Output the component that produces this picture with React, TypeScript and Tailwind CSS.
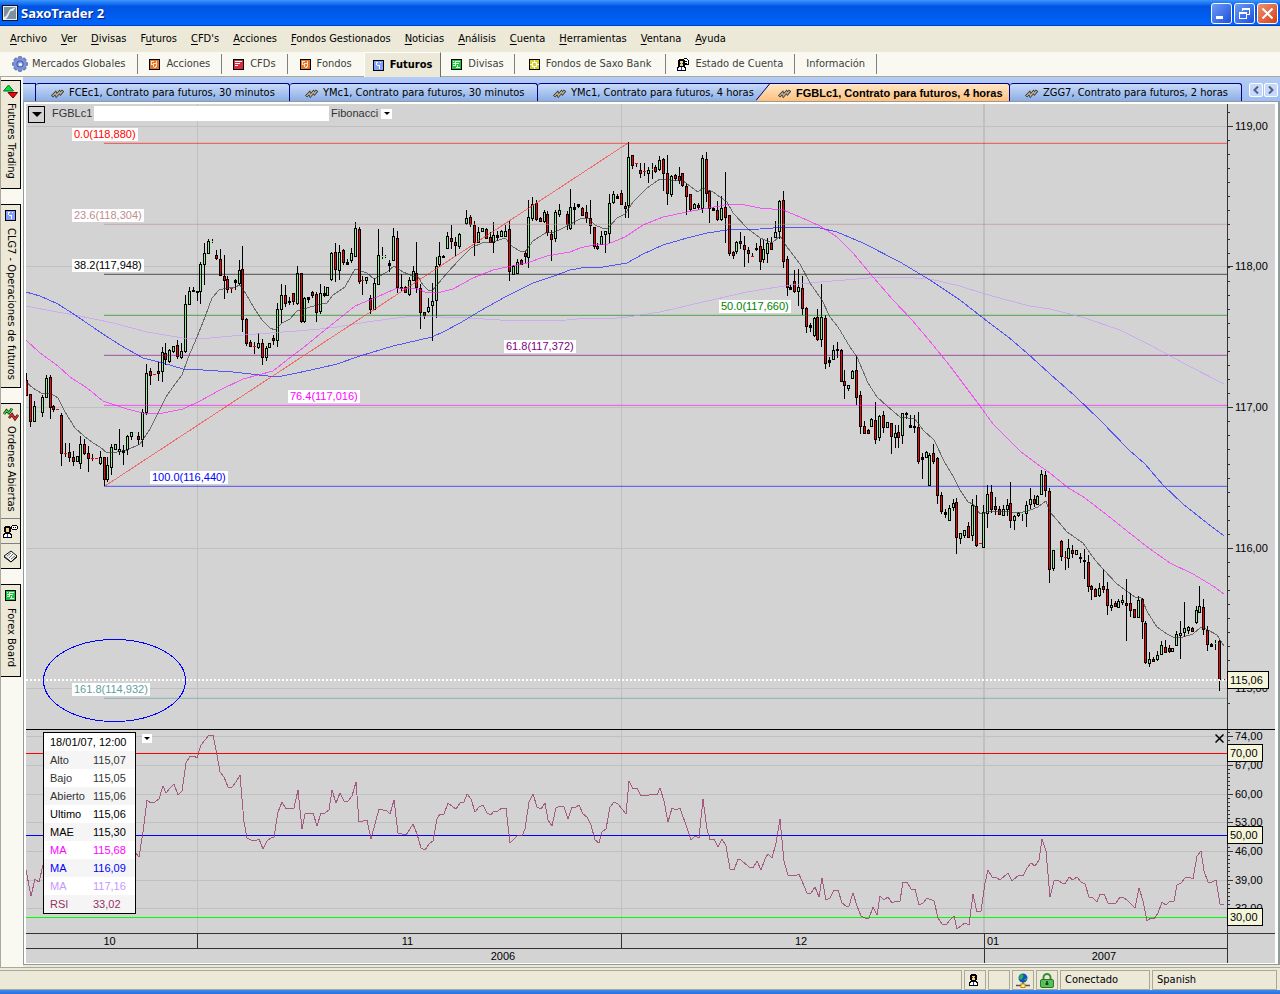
import React from "react";

// x, high, body top, body bottom, low, kind (r = down, g = up, k = flat)
const CANDLES = `
26 373 380 395 395 r|30 394 394 421 427 r|34 401 406 421 421 g|38 411 411 411 411 g|42 395 397 412 417 g|46 375 378 397 397 g|50 375 377 407 419 r|53 405 406 409 412 r|
57 409 409 409 409 r|61 413 415 453 466 r|65 443 453 453 457 r|69 443 452 457 462 r|73 451 457 461 466 r|77 456 456 461 461 g|80 436 444 463 469 g|84 439 444 453 455 r|
88 446 453 458 472 r|92 454 458 458 461 r|96 458 458 458 458 r|100 451 457 463 465 g|104 457 457 479 486 r|107 457 465 479 482 g|111 444 447 467 475 g|115 444 444 449 449 g|
119 429 449 451 455 g|123 445 450 452 465 k|127 435 436 449 455 g|131 432 432 436 440 g|135 432 432 432 432 g|138 432 436 439 445 r|142 409 412 439 447 g|146 364 373 412 415 g|
150 368 371 375 385 r|154 374 374 374 374 r|158 362 371 373 381 r|162 347 352 371 382 g|165 343 353 359 365 r|169 349 350 361 363 g|173 346 346 351 353 g|177 340 345 356 359 r|
181 343 351 357 359 g|185 295 304 351 353 g|189 287 291 304 304 g|193 287 290 291 292 k|197 291 291 292 301 k|200 262 264 291 304 g|204 243 253 264 285 g|208 239 241 253 253 g|
212 239 241 241 243 g|216 250 255 258 260 r|220 249 259 275 275 r|224 255 276 280 299 r|227 276 279 289 293 r|231 288 288 288 293 r|235 279 280 282 290 k|239 260 270 283 285 g|
242 246 269 319 332 r|246 318 319 343 346 r|250 340 342 346 346 r|254 342 346 346 354 r|258 333 343 347 349 g|262 339 343 357 365 r|266 346 348 357 361 g|269 343 343 347 347 g|
273 335 338 340 345 r|277 303 309 340 347 g|281 284 295 309 323 g|285 285 295 303 307 r|289 297 301 302 305 k|293 293 293 301 305 r|297 266 273 303 305 g|301 273 273 321 323 r|
304 297 298 321 323 g|308 297 297 299 303 k|312 291 292 295 298 r|316 292 294 312 322 r|320 284 293 311 314 g|324 286 293 295 297 k|327 287 287 295 295 g|331 252 253 279 281 g|
335 243 252 269 282 r|339 245 252 270 280 g|343 249 250 262 265 r|347 259 262 264 264 k|351 248 253 260 263 g|355 222 228 256 257 g|359 227 229 281 284 r|362 276 280 280 295 r|
366 277 277 280 284 g|370 295 298 309 314 r|374 278 283 309 310 g|378 229 255 284 284 g|382 247 256 256 259 g|385 255 256 256 258 g|389 260 263 265 272 k|393 228 236 260 261 g|
397 231 238 287 293 r|401 274 287 288 291 k|405 286 287 292 292 r|409 277 280 294 296 g|413 266 271 280 281 g|416 242 273 287 293 r|420 284 288 312 329 r|424 312 312 315 319 r|
428 298 307 311 313 g|432 283 301 305 341 g|436 257 266 300 318 g|439 242 256 264 267 g|443 255 256 257 258 k|447 232 236 248 249 g|451 225 238 241 249 r|455 237 242 245 256 r|
459 233 234 246 249 g|463 232 232 232 232 g|466 210 218 223 225 g|470 215 217 224 227 r|474 221 225 242 256 r|478 227 232 242 243 g|482 228 228 231 231 g|486 228 229 238 239 r|
490 232 237 242 243 r|493 222 235 242 253 g|497 231 235 237 241 k|501 230 231 236 237 g|505 225 231 236 237 g|509 221 229 271 281 r|513 265 266 274 275 g|517 259 262 273 274 g|
521 259 260 264 265 r|525 251 253 256 263 r|528 200 217 257 268 g|532 197 204 218 221 g|536 200 203 219 221 r|540 217 218 221 222 r|544 210 212 221 223 g|547 211 214 232 236 r|
551 230 234 239 261 r|555 210 212 238 242 g|559 204 210 214 217 g|563 211 211 211 211 g|567 211 214 224 230 r|570 189 207 228 230 g|574 203 207 209 225 k|578 204 204 206 208 k|
582 207 208 215 215 r|586 205 212 217 223 r|590 200 218 225 234 r|594 227 227 246 249 r|597 243 246 248 250 r|601 231 236 244 245 g|605 231 231 234 253 g|609 194 203 233 243 g|
613 191 194 202 204 g|617 194 196 198 199 k|621 190 193 204 205 r|625 202 206 208 218 r|628 142 157 205 218 g|632 155 155 165 169 r|636 163 163 163 167 r|640 163 170 173 178 r|
644 163 171 171 176 r|648 167 170 173 183 g|652 163 169 169 179 g|655 165 167 171 173 r|659 156 160 169 171 g|663 158 159 173 191 r|667 155 173 193 205 r|671 175 176 194 197 g|
675 174 175 178 181 r|679 167 176 180 184 r|682 173 173 185 187 r|686 183 186 196 215 r|690 194 194 209 211 r|694 203 204 208 209 g|698 203 205 207 210 r|702 155 158 208 213 g|
706 152 159 193 202 r|709 190 191 208 223 r|713 207 208 210 211 k|717 201 210 219 221 r|721 196 208 219 221 g|725 172 207 217 243 r|729 215 215 253 256 r|733 251 252 255 259 r|
736 241 242 251 254 g|740 232 241 243 249 r|744 236 245 249 267 r|748 247 250 253 263 r|752 253 256 256 257 r|756 243 248 249 251 k|760 239 246 261 270 r|763 240 249 259 263 g|
767 238 243 253 263 g|771 237 243 249 250 r|775 221 232 237 237 g|779 200 201 231 239 g|783 191 200 261 268 r|787 256 259 287 296 r|790 285 287 289 289 k|794 270 281 291 293 r|
798 269 287 291 306 g|802 276 288 308 315 r|806 307 308 326 333 r|810 323 325 327 332 k|814 317 318 335 337 g|817 309 317 339 341 r|821 284 317 339 347 g|825 315 318 363 369 r|
829 357 360 362 367 k|833 345 350 359 360 g|837 342 349 350 358 k|841 349 350 381 382 r|844 370 381 385 399 r|848 385 385 388 391 g|852 370 371 378 379 g|856 356 370 397 405 r|
860 391 395 426 434 r|864 421 426 433 433 r|868 429 430 433 434 r|871 418 419 426 427 g|875 402 420 439 444 r|879 415 416 437 441 g|883 411 415 427 433 r|887 422 422 427 427 g|
891 423 423 436 454 r|895 425 433 437 448 g|898 425 432 437 448 r|902 413 413 435 444 g|906 412 413 414 419 k|910 415 425 427 428 k|914 415 426 427 433 k|918 412 427 461 464 r|
922 453 457 459 479 k|926 451 452 457 458 g|929 453 455 485 485 g|933 444 453 461 464 r|937 457 458 495 504 r|941 492 495 511 514 r|945 509 512 514 518 k|949 505 508 520 521 g|
953 499 503 507 511 g|956 498 502 537 554 r|960 533 533 538 544 g|964 530 530 535 538 g|968 522 526 537 538 r|972 499 505 535 541 g|976 495 506 545 547 r|980 543 543 543 543 r|
983 505 512 547 547 g|987 485 494 513 528 g|991 485 492 509 513 r|995 497 506 509 515 r|999 506 509 514 514 r|1003 505 509 515 516 g|1007 499 505 509 516 g|1010 482 503 520 528 r|
1014 515 516 520 530 g|1018 512 513 515 517 g|1022 513 513 513 521 g|1026 501 505 513 527 g|1030 488 499 504 509 g|1034 495 499 503 507 r|1037 495 496 504 504 g|1041 470 474 494 495 g|
1045 471 475 490 497 r|1049 488 491 569 583 r|1053 550 550 568 571 g|1057 549 549 549 550 g|1061 540 541 556 561 r|1065 551 557 557 570 r|1068 539 548 558 568 g|1072 545 550 553 558 r|
1076 550 550 554 555 g|1080 553 557 558 563 k|1084 549 560 561 579 k|1088 555 562 586 592 r|1091 585 586 589 600 r|1095 588 589 596 597 r|1099 583 588 595 597 g|1103 569 586 589 593 r|
1107 582 589 605 615 r|1111 599 605 607 611 g|1115 601 603 606 607 r|1118 599 601 607 607 g|1122 595 600 602 605 g|1126 579 603 605 641 r|1130 593 603 610 617 r|1134 609 609 617 618 r|
1138 596 600 617 617 g|1142 598 599 621 639 r|1145 621 623 662 664 r|1149 652 659 663 667 g|1153 657 659 661 662 r|1157 651 655 659 661 g|1161 641 645 654 655 g|1165 640 647 652 652 r|
1169 645 648 651 653 r|1172 648 648 651 651 g|1176 631 634 645 646 g|1180 621 633 635 659 g|1184 602 628 632 637 g|1188 626 627 630 634 g|1192 627 628 631 631 r|1196 606 610 622 624 g|
1199 586 606 612 613 g|1203 599 607 629 635 r|1207 626 630 644 651 r|1211 643 644 646 647 k|1215 640 643 643 650 g|1219 640 641 679 691 r|1223 679 679 679 679 r`
  .split("|")
  .map((row) => {
    const [x, high, top, bottom, low, kind] = row.trim().split(" ");
    return { x: +x, high: +high, top: +top, bottom: +bottom, low: +low, kind };
  });

const AVERAGES = [
  {
    name: "MA200",
    color: "#c896ff",
    points:
      "26,306 57,312 75,315 113,323 147,332 183,338 210,338 243,335 270,333 297,331 320,329 337,327 367,322 397,318 415,316 467,318 500,320 530,321 567,320 587,318 607,319 627,317 660,312 703,302 747,292 790,285 820,282 857,279 880,277 900,277 930,279 960,286 985,294 1007,300 1030,306 1050,309 1085,318 1120,330 1150,345 1185,364 1224,384",
  },
  {
    name: "MA100",
    color: "#1414ff",
    points:
      "26,292 40,296 58,304 75,315 103,334 120,345 143,358 163,363 183,369 203,370 233,372 277,377 297,373 320,368 337,364 360,356 393,346 432,337 443,332 460,323 480,311 507,296 533,283 557,275 570,270 587,267 603,267 627,263 643,254 663,245 687,238 707,233 727,230 760,229 787,227 807,227 820,228 837,232 863,243 900,262 930,280 960,300 983,318 1007,336 1027,353 1050,374 1075,396 1100,420 1129,450 1145,464 1163,485 1183,504 1207,523 1224,536",
  },
  {
    name: "MA55",
    color: "#ff14ff",
    points:
      "26,340 40,353 58,366 70,377 87,388 103,401 127,409 143,413 163,413 183,409 200,401 220,390 243,379 258,375 273,371 287,360 303,348 320,334 355,306 377,297 395,289 415,288 425,292 437,293 453,289 473,278 493,270 507,267 527,263 547,256 570,252 580,248 593,245 608,244 625,237 643,225 663,217 687,212 720,206 728,204 740,204 760,208 783,210 800,217 820,226 837,237 853,253 873,277 893,300 912,320 933,345 950,366 980,406 993,424 1007,438 1020,451 1037,464 1050,473 1067,487 1085,498 1107,515 1127,531 1150,549 1170,563 1193,574 1213,586 1224,594",
  },
  {
    name: "MAE",
    color: "#333333",
    points:
      "26,382 33,388 41,393 50,393 58,398 65,412 75,428 84,436 93,443 100,447 107,453 117,452 127,450 140,444 150,429 158,413 166,397 175,384 182,375 188,358 197,337 205,317 212,298 219,290 227,288 235,287 240,285 246,294 254,308 262,320 270,328 275,330 282,323 290,319 297,311 307,308 317,305 327,303 333,295 345,287 355,269 367,273 374,279 387,272 394,266 403,272 413,276 418,277 423,285 428,290 432,291 437,285 447,273 460,259 471,248 482,243 493,242 505,238 513,247 520,251 525,252 533,241 547,232 553,233 567,226 580,219 588,218 595,225 602,228 608,228 617,218 625,214 633,202 647,188 660,179 670,180 683,181 698,192 703,188 713,192 727,202 733,213 747,228 760,238 772,243 780,236 787,247 800,264 810,283 822,300 830,317 838,327 850,347 857,357 868,383 877,397 887,406 900,417 915,419 923,430 934,440 945,463 953,476 960,490 968,502 973,504 980,514 987,512 1000,511 1020,513 1030,510 1038,507 1046,501 1050,512 1057,520 1067,532 1083,543 1095,560 1103,569 1117,584 1135,597 1141,598 1148,613 1157,627 1167,634 1173,637 1183,637 1193,634 1201,627 1208,630 1217,635 1224,646",
  },
];

const RSI =
  "26,870 31,896 35,879 39,882 43,865 60,850 90,862 120,845 136,853 139,857 143,832 147,800 151,803 155,802 159,799 163,786 166,793 170,788 174,784 178,795 182,791 186,763 190,756 194,756 197,758 201,745 205,740 209,735 213,735 217,755 220,772 224,777 228,787 232,787 236,782 240,775 244,822 247,838 251,840 255,841 259,839 263,849 267,841 271,838 274,837 278,812 282,802 286,809 290,808 294,808 298,790 302,829 305,814 313,813 317,826 321,813 325,813 329,810 332,790 336,803 340,793 344,801 348,801 352,796 356,782 359,822 367,820 371,839 379,809 387,811 390,814 394,800 398,833 406,835 410,829 413,824 417,834 421,848 425,850 429,844 433,841 437,819 440,814 444,814 448,803 456,809 460,803 464,802 467,794 471,799 475,812 479,807 483,805 487,813 491,815 494,811 498,811 502,808 506,808 510,843 518,835 522,836 525,829 529,802 533,794 537,807 541,809 545,803 548,820 552,826 556,808 560,806 564,807 568,819 572,807 576,807 579,805 583,814 587,817 591,825 595,840 599,843 602,832 606,829 610,807 614,802 618,804 626,814 629,781 633,789 637,788 641,796 649,795 653,794 657,795 660,788 664,801 668,822 672,808 676,810 680,808 687,828 691,840 695,836 699,838 703,799 707,829 710,840 714,839 718,847 722,839 726,846 730,869 734,870 738,859 741,860 749,867 753,868 757,861 761,870 765,859 768,854 772,858 776,843 780,819 784,861 788,875 795,876 799,874 807,893 811,893 815,887 819,897 822,878 826,900 830,898 834,890 838,890 842,903 846,906 849,906 853,893 857,906 861,916 865,918 869,918 873,907 877,915 880,896 884,900 888,897 892,903 896,901 900,901 903,882 907,882 911,889 915,889 919,905 923,903 927,898 934,901 938,918 942,924 946,925 950,920 954,916 957,929 965,923 969,925 973,894 977,912 981,911 985,883 988,870 992,877 996,877 1000,880 1008,873 1012,881 1019,875 1023,876 1027,868 1031,863 1035,866 1039,860 1042,839 1046,851 1050,897 1054,881 1058,880 1062,883 1065,884 1069,877 1073,880 1077,877 1081,882 1085,884 1089,897 1093,898 1097,902 1100,894 1104,894 1108,903 1116,903 1120,897 1123,897 1127,900 1135,908 1139,888 1143,901 1147,921 1151,918 1154,919 1158,913 1162,902 1166,905 1170,901 1174,901 1177,885 1181,883 1185,878 1189,877 1193,879 1197,856 1201,851 1204,871 1208,882 1212,882 1216,880 1220,904 1224,905";

const FIBS = [
  { label: "0.0(118,880)", x: 72, y: 128, line: 143, color: "#ff0000" },
  { label: "23.6(118,304)", x: 72, y: 209, line: 224, color: "#bc8f8f" },
  { label: "38.2(117,948)", x: 72, y: 259, line: 274, color: "#000000" },
  { label: "50.0(117,660)", x: 719, y: 300, line: 315, color: "#008000" },
  { label: "61.8(117,372)", x: 504, y: 340, line: 355, color: "#800080" },
  { label: "76.4(117,016)", x: 288, y: 390, line: 405, color: "#ff00ff" },
  { label: "100.0(116,440)", x: 150, y: 471, line: 486, color: "#0000ff" },
  { label: "161.8(114,932)", x: 72, y: 683, line: 698, color: "#5f9ea0" },
];

const PRICE_TICKS = [
  { y: 126, label: "119,00" },
  { y: 266, label: "118,00" },
  { y: 407, label: "117,00" },
  { y: 548, label: "116,00" },
  { y: 688, label: "115,00" },
];

const RSI_TICKS = [
  { y: 736, label: "74,00" },
  { y: 765, label: "67,00" },
  { y: 794, label: "60,00" },
  { y: 822, label: "53,00" },
  { y: 851, label: "46,00" },
  { y: 880, label: "39,00" },
  { y: 908, label: "32,00" },
];

const RSI_LEVELS = [
  { y: 753, label: "70,00", color: "#ff0000" },
  { y: 835, label: "50,00", color: "#0000ff" },
  { y: 917, label: "30,00", color: "#00ff00" },
];

const READOUT = [
  { name: "Alto", value: "115,07", tone: "text-[#333]" },
  { name: "Bajo", value: "115,05", tone: "text-[#333]" },
  { name: "Abierto", value: "115,06", tone: "text-[#333]" },
  { name: "Ultimo", value: "115,06", tone: "text-black" },
  { name: "MAE", value: "115,30", tone: "text-black" },
  { name: "MA", value: "115,68", tone: "text-[#f0f]" },
  { name: "MA", value: "116,09", tone: "text-[#00f]" },
  { name: "MA", value: "117,16", tone: "text-[#c896ff]" },
  { name: "RSI", value: "33,02", tone: "text-[#963264]" },
];

const MENU = [
  ["", "A", "rchivo"],
  ["", "V", "er"],
  ["", "D", "ivisas"],
  ["F", "u", "turos"],
  ["", "C", "FD's"],
  ["", "A", "cciones"],
  ["", "F", "ondos Gestionados"],
  ["", "N", "oticias"],
  ["", "A", "nálisis"],
  ["", "C", "uenta"],
  ["", "H", "erramientas"],
  ["", "V", "entana"],
  ["", "A", "yuda"],
];

const top = (y: number, from: number, height: number) => `${((y - from) / height) * 100}%`;

function GearIcon() {
  return (
    <svg width="16" height="16" viewBox="0 0 16 16">
      <g fill="#7187d2" stroke="#4656a0" strokeWidth="0.6">
        {[0, 45, 90, 135].map((a) => (
          <rect key={a} x="6.2" y="0.5" width="3.6" height="15" rx="1" transform={`rotate(${a} 8 8)`} />
        ))}
      </g>
      <circle cx="8" cy="8" r="5.6" fill="#7f95dc" />
      <circle cx="8" cy="8" r="3.6" fill="#4458aa" />
      <circle cx="8" cy="8" r="2.6" fill="#8fa4e6" />
      <circle cx="8.5" cy="8.5" r="1.6" fill="#f9f9f2" />
    </svg>
  );
}

function StocksIcon() {
  return (
    <svg width="11" height="11" viewBox="0 0 11 11" shapeRendering="crispEdges">
      <rect x="0.5" y="0.5" width="10" height="10" fill="#e8742a" stroke="#000" />
      <path d="M2 2.5h3M2.5 2v3M2 5.5h2M4.500 4v4M4 4.500h4M7.500 2v5M6 7.500h2M5 8.500h2" fill="none" stroke="#fbe3d0" />
    </svg>
  );
}

function CfdIcon() {
  return (
    <svg width="11" height="11" viewBox="0 0 11 11" shapeRendering="crispEdges">
      <rect x="0.5" y="0.5" width="10" height="10" fill="#d72d3c" stroke="#000" />
      <path d="M2 2.5h7M2 4.5h5M2 6.5h3" fill="none" stroke="#fff" />
    </svg>
  );
}

function FuturesIcon() {
  return (
    <svg width="11" height="11" viewBox="0 0 11 11" shapeRendering="crispEdges">
      <rect x="0.5" y="0.5" width="10" height="10" fill="#82a0ff" stroke="#000" />
      <path d="M3.500 2v3M4 5.500h2M6.500 5v4M7.500 2v1M4 2.500h1" fill="none" stroke="#fff" />
    </svg>
  );
}

function ForexIcon() {
  return (
    <svg width="11" height="11" viewBox="0 0 11 11" shapeRendering="crispEdges">
      <rect x="0.5" y="0.5" width="10" height="10" fill="#1ec83c" stroke="#000" />
      <path d="M2 2.500h1M4 2.500h5M2 4.500h6M4.500 2v5M2 6.500h3M5 8.500h4M6.500 6v3" fill="none" stroke="#e6ffe6" />
    </svg>
  );
}

function FundIcon() {
  return (
    <svg width="11" height="11" viewBox="0 0 11 11" shapeRendering="crispEdges">
      <rect x="0.5" y="0.5" width="10" height="10" fill="#d7d223" stroke="#000" />
      <path d="M3.5 3.5h4v4h-4zM5.5 1v2M5.5 8v2M1 5.5h2M8 5.5h2" fill="none" stroke="#fff" />
    </svg>
  );
}

function AdvisorIcon() {
  return (
    <svg width="12" height="13" viewBox="0 0 12 13" shapeRendering="crispEdges">
      <path d="M6.500 0.500h3l2 2v4h-4" fill="#fff" stroke="#000" />
      <path d="M8 3.500h2M8 5.500h2" stroke="#000" />
      <path d="M2 1h5v1h1v6H7v1H2V8H1V2h1z" fill="#000" />
      <path d="M3 3h3v5H3z" fill="#f5d28c" />
      <path d="M3 5h1v1H3zM5 5h1v1H5z" fill="#6e4614" />
      <path d="M0.500 12.500v-3l2-1h4l2 1v3z" fill="#fff" stroke="#000" />
      <path d="M4 9h1v3H4z" fill="#1e32dc" />
    </svg>
  );
}

function PersonIcon() {
  return (
    <svg width="9" height="12" viewBox="0 0 9 12" shapeRendering="crispEdges">
      <path d="M2 0h5v1h1v5H7v1H2V6H1V1h1z" fill="#000" />
      <path d="M3 2h3v4H3z" fill="#f5d28c" />
      <path d="M3 3h1v1H3zM5 3h1v1H5z" fill="#6e4614" />
      <path d="M0.500 11.500v-3l2-1h4l2 1v3z" fill="#fff" stroke="#000" />
      <path d="M4 8h1v3H4z" fill="#1e32dc" />
    </svg>
  );
}

function ZigIcon() {
  return (
    <svg width="13" height="9" viewBox="0 0 13 9">
      <path d="M1 7.500L4.500 4l1 2.500L8.500 3l1 1.500L12 1.500" fill="none" stroke="#333" strokeWidth="3" />
      <path d="M1.500 7L4.500 4l1 2.500L8.500 3l1 1.500 2-2.500" fill="none" stroke="#b9ad8c" strokeWidth="1.500" />
    </svg>
  );
}

function TitleBar() {
  return (
    <header className="flex h-[26px] shrink-0 items-center justify-between bg-linear-to-b from-[#3c96ff] via-[#0054e3] via-25% to-[#0066fc] px-0.5 shadow-[inset_0_-1px_0_#003cc8]">
      <div className="flex items-center gap-[3px]">
        <svg width="16" height="16" viewBox="0 0 16 16">
          <rect x="0.5" y="0.5" width="15" height="15" fill="#7d91a0" stroke="#111" />
          <rect x="1.5" y="1.5" width="13" height="13" fill="none" stroke="#e8eef2" />
          <path d="M2 12c4-1 4-7 7-8l5-2-3 4-2 0c-2 1-2 6-5 8H2z" fill="#e4ecf0" />
        </svg>
        <h1 className="pt-px font-['Noto_Sans',sans-serif] text-[13px] font-bold text-white [text-shadow:1px_1px_#0a1e82]">SaxoTrader 2</h1>
      </div>
      <div className="flex gap-0.5">
        <button aria-label="Minimizar" className="flex size-[21px] items-end rounded-[3px] border border-white bg-linear-to-br from-[#6e9bf0] to-[#1e4be0] pb-1 pl-1">
          <span className="h-[3px] w-[7px] bg-white" />
        </button>
        <button aria-label="Restaurar" className="flex size-[21px] items-center justify-center rounded-[3px] border border-white bg-linear-to-br from-[#6e9bf0] to-[#1e4be0]">
          <svg width="11" height="11" viewBox="0 0 11 11" fill="none" stroke="#fff" shapeRendering="crispEdges">
            <path d="M3.5 3V0.5h7v6H8M3 1.5h8M0.5 4.5h7v6h-7zM0 5.5h8" />
          </svg>
        </button>
        <button aria-label="Cerrar" className="flex size-[21px] items-center justify-center rounded-[3px] border border-white bg-linear-to-br from-[#f0906e] to-[#d23c14]">
          <svg width="11" height="11" viewBox="0 0 11 11" stroke="#fff" strokeWidth="2">
            <path d="M0.5 0.5l10 10M10.5 0.5l-10 10" />
          </svg>
        </button>
      </div>
    </header>
  );
}

function ToolButton({ icon, pad = "px-[11px]", children }: { icon?: React.ReactNode; pad?: string; children: React.ReactNode }) {
  return (
    <button className={`my-0.5 flex items-center gap-1.5 border-r border-[#808080] text-[#404040] ${pad}`}>
      {icon}
      {children}
    </button>
  );
}

function Toolbar() {
  return (
    <nav className="flex h-[25px] shrink-0 items-stretch border-b border-[#aca899] bg-[#f9f9f2] whitespace-nowrap">
      <button className="my-0.5 flex items-center gap-1 border-r border-[#808080] px-3 text-[#404040]">
        <GearIcon />
        Mercados Globales
      </button>
      <ToolButton icon={<StocksIcon />}>Acciones</ToolButton>
      <ToolButton icon={<CfdIcon />}>CFDs</ToolButton>
      <button className="flex items-center gap-1.5 px-3 text-[#404040]">
        <StocksIcon />
        Fondos
      </button>
      <button className="-mb-px flex items-center gap-1.5 border-t border-r border-l border-t-white border-r-[#716f64] border-l-white bg-[#ece9d8] px-2 font-bold text-black">
        <FuturesIcon />
        Futuros
      </button>
      <ToolButton icon={<ForexIcon />} pad="px-2.5">
        Divisas
      </ToolButton>
      <ToolButton icon={<FundIcon />} pad="px-3.5">
        Fondos de Saxo Bank
      </ToolButton>
      <ToolButton icon={<AdvisorIcon />}>Estado de Cuenta</ToolButton>
      <ToolButton>Información</ToolButton>
    </nav>
  );
}

const sideTab = "flex items-center border border-l-0 border-black bg-[#ece9d8] [writing-mode:vertical-rl]";

function Sidebar() {
  return (
    <aside className="flex w-[23px] shrink-0 flex-col items-start gap-[15px] border-l border-[#aca899] bg-[#f9f9f2] pt-[3px] whitespace-nowrap text-black">
      <button className={`${sideTab} h-[109px] w-5 gap-1 pt-0.5`}>
        <svg width="16" height="16" viewBox="0 0 16 16">
          <path d="M0.5 8L5.5 2l5 6z" fill="#00e628" stroke="#064" />
          <path d="M5 9.500h9.500L10 15z" fill="#ff0000" stroke="#600" />
        </svg>
        Futures Trading
      </button>
      <button className={`${sideTab} h-[184px] w-5 gap-[7px] pt-[5px]`}>
        <FuturesIcon />
        CLG7 - Operaciones de futuros
      </button>
      <div className="flex h-[166px] w-5 flex-col border border-l-0 border-black bg-[#ece9d8]">
        <button className="flex h-[114px] items-center gap-1 self-center pt-[3px] [writing-mode:vertical-rl]">
          <svg width="16" height="15" viewBox="0 0 16 15" fill="none">
            <path d="M1 7l2.500-3.500L6 6l3-4.500" stroke="#111" strokeWidth="2.600" />
            <path d="M1 7l2.500-3.500L6 6l3-4.500" stroke="#32dc32" strokeWidth="1.400" />
            <path d="M6 11l3-3.500 3 4.500 3-4" stroke="#111" strokeWidth="2.600" />
            <path d="M6 11l3-3.500 3 4.500 3-4" stroke="#f02828" strokeWidth="1.400" />
          </svg>
          Ordenes Abiertas
        </button>
        <button aria-label="Mensajes" className="flex h-[25px] items-center justify-center border-t border-[#808080]">
          <svg width="15" height="13" viewBox="0 0 15 13" shapeRendering="crispEdges">
            <path d="M9 0.500h5M9 4.500h5M8.500 1v3M14.500 1v3" stroke="#000" />
            <path d="M9 1h5v3H9z" fill="#fff" />
            <path d="M10 2h1v1h-1zM12 2h1v1h-1z" fill="#000" />
            <path d="M2 1h5v1h1v5H7v1H2V7H1V2h1z" fill="#000" />
            <path d="M3 3h3v4H3z" fill="#f5d28c" />
            <path d="M0.500 12.500v-3l2-1h4l2 1v3z" fill="#fff" stroke="#000" />
            <path d="M4 9h1v3H4z" fill="#1e32dc" />
          </svg>
        </button>
        <button aria-label="Noticias" className="flex h-[25px] items-center justify-center border-t border-[#808080]">
          <svg width="15" height="13" viewBox="0 0 15 13">
            <path d="M1 6L8 1l6 5-6 6z" fill="#f0f0f0" stroke="#111" />
            <path d="M4 6l4-3M6 8l4-4M8 9l4-3" stroke="#777" />
            <path d="M1 7l7 5 6-5" fill="none" stroke="#111" />
          </svg>
        </button>
      </div>
      <button className={`${sideTab} h-[93px] w-5 gap-[7px] pt-[5px]`}>
        <ForexIcon />
        Forex Board
      </button>
    </aside>
  );
}

const docTab =
  "flex shrink-0 items-center gap-[5px] rounded-t-[3px] border-t border-r border-[#000080] bg-linear-to-b from-[#c8daf8] to-[#8caee6] pt-0.5 pl-[15px] text-black";

function DocumentTabs() {
  return (
    <div className="flex h-6 shrink-0 items-end justify-between bg-linear-to-b from-[#b4ccf5] to-[#9ebef5] whitespace-nowrap">
      <div className="flex h-[18px] min-w-0 items-stretch overflow-hidden">
        <button aria-label="Anterior" className="w-[13px] shrink-0 border-t border-r border-[#000080] bg-linear-to-b from-[#c8daf8] to-[#8caee6]" />
        <button className={`${docTab} w-[254px]`}>
          <ZigIcon />
          FCEc1, Contrato para futuros, 30 minutos
        </button>
        <button className={`${docTab} w-[248px]`}>
          <ZigIcon />
          YMc1, Contrato para futuros, 30 minutos
        </button>
        <button className="flex w-[218px] shrink-0 items-center gap-[5px] rounded-tl-[3px] border-t border-[#000080] bg-linear-to-b from-[#c8daf8] to-[#8caee6] pt-0.5 pl-[15px] text-black">
          <ZigIcon />
          YMc1, Contrato para futuros, 4 horas
        </button>
        <svg className="shrink-0" width="14" height="18" viewBox="0 0 14 18">
          <defs>
            <linearGradient id="idle" x1="0" x2="0" y1="0" y2="1">
              <stop offset="0" stopColor="#c8daf8" />
              <stop offset="1" stopColor="#8caee6" />
            </linearGradient>
            <linearGradient id="active" x1="0" x2="0" y1="0" y2="1">
              <stop offset="0" stopColor="#ffe6c8" />
              <stop offset="1" stopColor="#ffc07a" />
            </linearGradient>
          </defs>
          <path d="M0 0h14v18H0z" fill="url(#idle)" />
          <path d="M0 18L14 1v17z" fill="url(#active)" />
          <path d="M0 0.5h14M0 17.5L13.5 1" fill="none" stroke="#000080" />
        </svg>
        <button className="flex w-[240px] shrink-0 items-center gap-[5px] rounded-tr-[3px] border-t border-r border-[#000080] bg-linear-to-b from-[#ffe6c8] to-[#ffc07a] pt-0.5 pl-2 font-['Liberation_Sans',sans-serif] font-bold text-black">
          <ZigIcon />
          FGBLc1, Contrato para futuros, 4 horas
        </button>
        <button className={`${docTab} w-[232px]`}>
          <ZigIcon />
          ZGG7, Contrato para futuros, 2 horas
        </button>
      </div>
      <div className="flex gap-px pr-0.5 pb-1">
        <button aria-label="Pestañas anteriores" className="flex h-[14px] w-3.5 items-center justify-center rounded-[2px] border border-white bg-[#c8d8fa]">
          <svg width="6" height="8" viewBox="0 0 6 8" fill="none" stroke="#4d6185" strokeWidth="2">
            <path d="M5 0.5L1.5 4 5 7.5" />
          </svg>
        </button>
        <button aria-label="Pestañas siguientes" className="flex h-[14px] w-3.5 items-center justify-center rounded-[2px] border border-white bg-[#c8d8fa]">
          <svg width="6" height="8" viewBox="0 0 6 8" fill="none" stroke="#4d6185" strokeWidth="2">
            <path d="M1 0.5L4.5 4 1 7.5" />
          </svg>
        </button>
      </div>
    </div>
  );
}

function PricePlot() {
  return (
    <div className="relative min-h-0 overflow-hidden">
      <svg className="absolute inset-0 h-full w-full" viewBox="26 104 1201 625" preserveAspectRatio="none" shapeRendering="crispEdges">
        <g fill="#c0c0c0">
          {PRICE_TICKS.map((t) => (
            <rect key={t.y} x="26" y={t.y} width="1201" height="1" />
          ))}
          <rect x="197" y="104" width="1" height="625" />
          <rect x="621" y="104" width="1" height="625" />
          <rect x="983" y="104" width="2" height="625" />
        </g>
        {CANDLES.map((c) => {
          const fill = c.kind === "r" ? "#ff0000" : c.kind === "g" ? "#90ee90" : "#000000";
          return (
            <g key={c.x}>
              {c.low > c.high && <rect x={c.x} y={c.high} width="1" height={c.low - c.high} />}
              {c.bottom > c.top ? (
                <>
                  <rect x={c.x - 1} y={c.top} width="3" height={c.bottom - c.top + 1} />
                  {c.bottom - c.top > 1 && <rect x={c.x} y={c.top + 1} width="1" height={c.bottom - c.top - 1} fill={fill} />}
                </>
              ) : (
                <rect x={c.x - 1} y={c.top} width="3" height="1" fill={fill} />
              )}
            </g>
          );
        })}
        {FIBS.map((f) => (
          <g key={f.label} fill={f.color}>
            <rect x="104" y={f.line} width="1123" height="1" opacity="0.5" />
            <rect x="104" y={f.line - 1} width="1123" height="1" opacity="0.12" />
          </g>
        ))}
        <g fill="none" strokeOpacity="0.65">
          {AVERAGES.map((a) => (
            <polyline key={a.name} points={a.points} stroke={a.color} />
          ))}
          <path d="M105 486L628 143" stroke="#ff3232" />
        </g>
        <path d="M26 680H1227" stroke="#fff" strokeWidth="2" strokeDasharray="2 2" />
        <ellipse cx="114.5" cy="680.5" rx="71" ry="41" fill="none" stroke="#0000ff" />
      </svg>
      {FIBS.map((f) => (
        <span
          key={f.label}
          className="absolute bg-white px-0.5 leading-[13px]"
          style={{ left: `${((f.x - 26) / 1201) * 100}%`, top: top(f.y, 104, 625), color: f.color }}
        >
          {f.label}
        </span>
      ))}
      <form className="absolute top-0.5 left-0.5 flex items-start text-[#333]">
        <button type="button" aria-label="Opciones" className="flex h-[17px] w-[17px] items-center justify-center border border-black">
          <span className="border-x-5 border-t-5 border-x-transparent border-t-black" />
        </button>
        <label htmlFor="symbol" className="w-[49px] pl-[7px] leading-[15px]">
          FGBLc1
        </label>
        <input id="symbol" className="h-[15px] w-[235px] bg-white outline-none" />
        <label className="relative ml-0.5 flex items-center gap-1">
          <select aria-label="Estudio" className="w-[61px] appearance-none bg-transparent leading-[15px] outline-none">
            <option>Fibonacci</option>
          </select>
          <span className="pointer-events-none absolute right-0 flex h-[10px] w-[11px] items-center justify-center bg-white">
            <span className="border-x-3 border-t-3 border-x-transparent border-t-black" />
          </span>
        </label>
      </form>
    </div>
  );
}

function PriceAxis() {
  const minor = Array.from({ length: 43 }, (_, i) => Math.round(112 + i * 14.06));
  return (
    <div className="relative min-h-0 overflow-hidden text-black">
      <svg className="absolute inset-0 h-full w-full" viewBox="1227 104 48 625" preserveAspectRatio="none" fill="#333" shapeRendering="crispEdges">
        <rect x="1227" y="104" width="1" height="625" />
        {minor.map((y) => (
          <rect key={y} x="1228" y={y} width="2" height="1" />
        ))}
        {PRICE_TICKS.map((t) => (
          <rect key={t.y} x="1228" y={t.y} width="5" height="1" />
        ))}
      </svg>
      {PRICE_TICKS.map((t) => (
        <span key={t.y} className="absolute left-2 -translate-y-1/2 leading-[14px]" style={{ top: top(t.y, 104, 625) }}>
          {t.label}
        </span>
      ))}
      <span className="absolute left-0 w-[42px] -translate-y-1/2 border border-black bg-[#f5f5dc] pl-0.5 leading-4" style={{ top: top(680, 104, 625) }}>
        115,06
      </span>
    </div>
  );
}

function RsiPlot() {
  return (
    <div className="relative border-t border-black">
      <svg className="absolute inset-0 h-full w-full" viewBox="26 730 1201 203" preserveAspectRatio="none" shapeRendering="crispEdges">
        <g fill="#c0c0c0">
          {RSI_TICKS.map((t) => (
            <rect key={t.y} x="26" y={t.y} width="1201" height="1" />
          ))}
          <rect x="197" y="730" width="1" height="203" />
          <rect x="621" y="730" width="1" height="203" />
          <rect x="983" y="730" width="2" height="203" />
        </g>
        {RSI_LEVELS.map((l) => (
          <rect key={l.y} x="26" y={l.y} width="1201" height="1" fill={l.color} />
        ))}
        <polyline points={RSI} fill="none" stroke="#963264" strokeOpacity="0.75" />
      </svg>
      <table className="absolute top-0.5 left-[17px] w-[93px] border-separate border-spacing-0 border border-black bg-white text-left">
        <thead>
          <tr className="h-[18px]">
            <th colSpan={2} className="pl-1.5 leading-4 font-normal text-black">
              18/01/07, 12:00
            </th>
          </tr>
        </thead>
        <tbody>
          {READOUT.map((r, i) => (
            <tr key={i} className={`h-[18px] odd:bg-[#f5f5f5] ${r.tone}`}>
              <td className="w-[49px] pl-1.5 leading-4">{r.name}</td>
              <td className="leading-4">{r.value}</td>
            </tr>
          ))}
        </tbody>
      </table>
      <button aria-label="Mostrar datos" className="absolute top-1 left-[116px] flex h-[9px] w-[10px] items-center justify-center bg-white">
        <span className="border-x-3 border-t-3 border-x-transparent border-t-black" />
      </button>
      <button aria-label="Cerrar RSI" className="absolute top-1 right-[3px]">
        <svg width="9" height="9" viewBox="0 0 9 9" stroke="#000" strokeWidth="1.5">
          <path d="M0.5 0.5l8 8M8.5 0.5l-8 8" />
        </svg>
      </button>
    </div>
  );
}

function RsiAxis() {
  const minor = Array.from({ length: 48 }, (_, i) => Math.round(732 + i * 4.1));
  return (
    <div className="relative border-t border-black text-black">
      <svg className="absolute inset-0 h-full w-full" viewBox="1227 730 48 203" preserveAspectRatio="none" fill="#333" shapeRendering="crispEdges">
        <rect x="1227" y="730" width="1" height="203" />
        {minor.map((y) => (
          <rect key={y} x="1228" y={y} width="2" height="1" />
        ))}
        {RSI_TICKS.map((t) => (
          <rect key={t.y} x="1228" y={t.y} width="5" height="1" />
        ))}
      </svg>
      {RSI_TICKS.map((t) => (
        <span key={t.y} className="absolute left-2 -translate-y-1/2 leading-[14px]" style={{ top: top(t.y, 730, 203) }}>
          {t.label}
        </span>
      ))}
      {RSI_LEVELS.map((l) => (
        <span key={l.y} className="absolute left-0 w-9 -translate-y-1/2 border border-black bg-[#f5f5dc] pl-0.5 leading-4" style={{ top: top(l.y, 730, 203) }}>
          {l.label}
        </span>
      ))}
    </div>
  );
}

function Chart() {
  return (
    <section className="mb-0.5 min-h-0 flex-1 border-t border-r-2 border-b border-l border-[#919b9c] bg-white pt-0.5 pr-[3px] pb-px pl-0.5">
      <div className="grid h-full grid-cols-[minmax(0,1fr)_48px] grid-rows-[minmax(0,1fr)_204px_15px_15px] bg-[#d3d3d3] font-['Liberation_Sans',Arial,sans-serif] text-[11px]">
        <PricePlot />
        <PriceAxis />
        <RsiPlot />
        <RsiAxis />
        <div className="grid grid-cols-[171fr_424fr_363fr_243fr] border-t border-[#333] text-center leading-[14px] text-black">
          <span className="pr-1">10</span>
          <span className="border-l border-[#333] pr-1">11</span>
          <span className="border-l border-[#333] pr-1">12</span>
          <span className="border-l border-[#333] pl-0.5 text-left">01</span>
        </div>
        <div className="border-t border-l border-[#333]" />
        <div className="grid grid-cols-[958fr_243fr] border-t border-[#333] text-center leading-[14px] text-black">
          <span className="pr-1">2006</span>
          <span className="border-l border-[#333] pr-1">2007</span>
        </div>
        <div className="border-l border-[#333]" />
      </div>
    </section>
  );
}

const pane = "flex h-5 items-center border border-[#aca899]";

function StatusBar() {
  return (
    <footer className="flex h-[23px] shrink-0 items-end gap-0.5 border-t border-[#aca899] bg-[#ece9d8] pr-[3px]">
      <div className={`${pane} flex-1 border-l-0`} />
      <div className={`${pane} w-[22px] justify-center pr-1`}>
        <PersonIcon />
      </div>
      <div className={`${pane} w-[22px]`} />
      <div className={`${pane} w-[22px] justify-center`}>
        <svg width="14" height="15" viewBox="0 0 14 15">
          <circle cx="7" cy="5" r="4.5" fill="#1450c8" />
          <path d="M4 1.5c3-1 4 1 3 3s-2 3-4 1zM8 6l3-1-1 3z" fill="#28b43c" />
          <path d="M7 9v3M0 12.5h14" stroke="#555" strokeWidth="1.5" />
          <rect x="5" y="11" width="4" height="3.5" fill="#fff0a0" stroke="#c88c00" />
        </svg>
      </div>
      <div className={`${pane} w-[22px] justify-center`}>
        <svg width="14" height="15" viewBox="0 0 14 15">
          <path d="M3.5 7V4.5a3.5 3.5 0 017 0V7" fill="none" stroke="#3c8c3c" strokeWidth="2" />
          <rect x="0.5" y="6.5" width="13" height="8" rx="1.5" fill="#5abe5a" stroke="#287828" />
          <path d="M7 8v4M5.5 11h3" stroke="#0a3c0a" strokeWidth="1.5" />
        </svg>
      </div>
      <div className={`${pane} w-[90px] pl-1 text-black`}>Conectado</div>
      <div className={`${pane} w-[125px] pl-1 text-black`}>Spanish</div>
    </footer>
  );
}

export default function App() {
  return (
    <div className="flex h-screen min-h-[700px] flex-col overflow-hidden bg-[#ece9d8] font-['DejaVu_Sans_Condensed','DejaVu_Sans',sans-serif] text-[11px]">
      <TitleBar />
      <nav className="flex h-[26px] shrink-0 items-center gap-3.5 bg-[#ece9d8] pl-2.5 whitespace-nowrap text-black">
        {MENU.map(([before, key, after]) => (
          <button key={key + after}>
            {before}
            <span className="underline underline-offset-2">{key}</span>
            {after}
          </button>
        ))}
      </nav>
      <Toolbar />
      <div className="flex min-h-0 flex-1">
        <Sidebar />
        <main className="flex min-w-0 flex-1 flex-col">
          <DocumentTabs />
          <Chart />
        </main>
      </div>
      <StatusBar />
      <div className="h-1 shrink-0 bg-linear-to-b from-[#3c8cf0] to-[#2a6fdc]" />
    </div>
  );
}
